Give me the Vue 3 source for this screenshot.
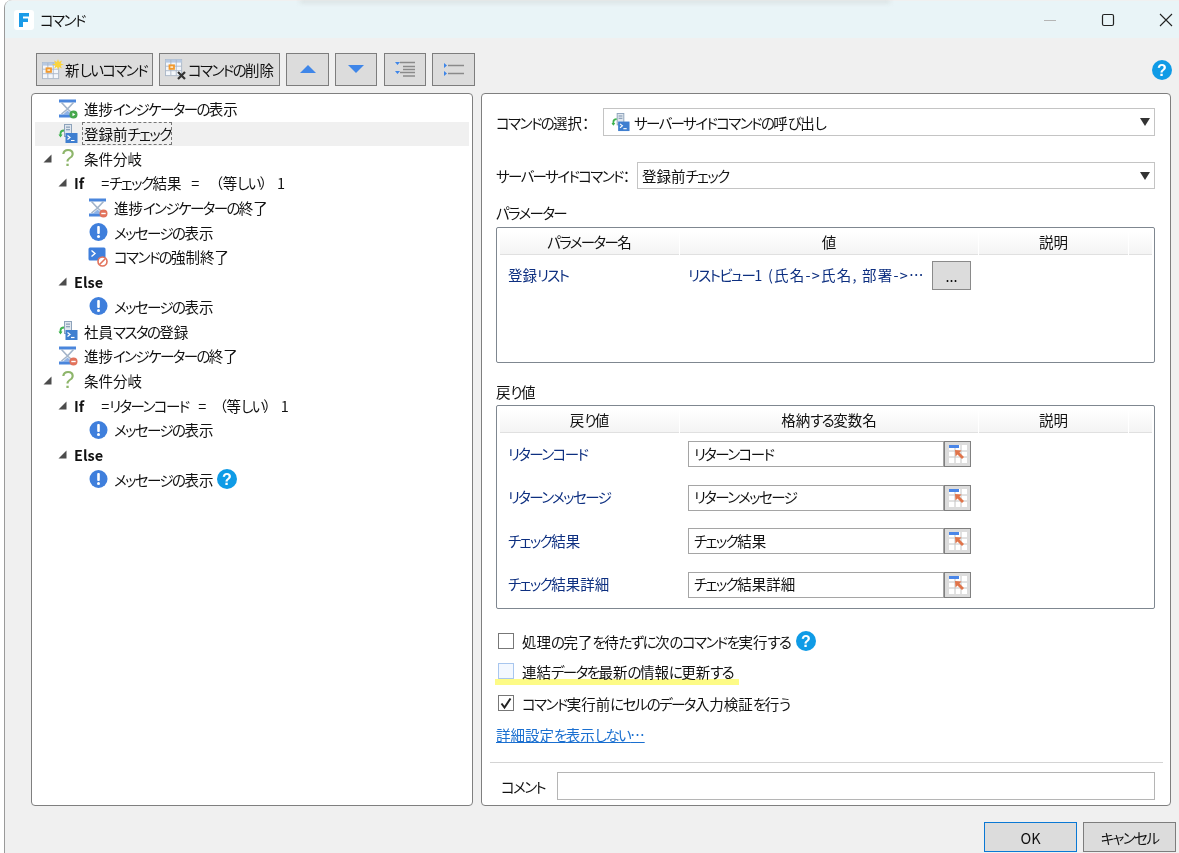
<template>
  <div class="page">
    <!-- icon sheet -->
    <svg class="sheet" aria-hidden="true">
      <defs>
        <symbol id="glass" viewBox="0 0 20 20">
          <rect x="1" y="0.5" width="17" height="3" fill="#4a86dc" />
          <path d="M3.5 3.5 L9.5 10 L3.5 15 M15.5 3.5 L9.5 10 L15.5 15" fill="none" stroke="#a3b4c9" stroke-width="1.6" />
          <path d="M9.5 11.5 L14 15.5 H5 Z" fill="#8fb3e6" />
          <rect x="1" y="15.5" width="13" height="3" fill="#4a86dc" />
        </symbol>
        <symbol id="server" viewBox="0 0 20 20">
          <rect x="6.5" y="0.5" width="7" height="12" fill="#dfe6ee" stroke="#8ea3bb" />
          <rect x="8" y="2.5" width="4" height="1.3" fill="#8ea3bb" />
          <rect x="8" y="5" width="4" height="1.3" fill="#8ea3bb" />
          <rect x="7.5" y="9" width="12" height="10" fill="#3f7fd0" />
          <path d="M9.5 11.5 L12 13.5 L9.5 15.5" fill="none" stroke="#fff" stroke-width="1.2" />
          <path d="M13 16.5 H16.5" stroke="#fff" stroke-width="1.2" />
          <path d="M2.5 12 V9.5 Q2.5 6.5 6 6.5" fill="none" stroke="#3fb34f" stroke-width="1.8" />
          <path d="M0.5 10.5 H4.5 L2.5 13.5 Z" fill="#3fb34f" />
        </symbol>
        <symbol id="grid" viewBox="0 0 20 20">
          <rect x="0.5" y="0.5" width="18" height="18" fill="#f4f7fb" stroke="#a9b6c6" />
          <rect x="0.5" y="0.5" width="18" height="3.5" fill="#b7c9e2" />
          <path d="M6.5 1 V18 M12.5 1 V18 M1 8 H18 M1 13 H18" stroke="#a9b6c6" />
          <rect x="4" y="6" width="7" height="6" fill="#f29a2e" />
          <rect x="6" y="8" width="3" height="2" fill="#fde3bd" />
        </symbol>
        <symbol id="picker" viewBox="0 0 20 20">
          <rect x="1" y="1" width="18" height="18" fill="#fff" />
          <path d="M7 1 V19 M13 1 V19 M1 7 H19 M1 13 H19" stroke="#c4c4c4" />
          <rect x="1" y="1" width="10" height="3" fill="#4a86e8" />
          <path d="M7 6 L13.5 6.5 L11.5 8.5 L16 13 L14 15 L9.5 10.5 L7.5 12.5 Z" fill="#e0744a" />
        </symbol>
      </defs>
    </svg>

    <div class="shadow"></div>
    <div class="window">
      <div class="titlebar">
        <span class="app-icon">
          <svg width="12" height="14" viewBox="0 0 12 14">
            <path d="M1 0 H11 V3.5 H5 V5.5 H10 V9 H5 V14 H1 Z" fill="#1b9be8" />
          </svg>
        </span>
        <Jp class="title" t="コマンド" />
        <span class="win-btns">
          <svg width="14" height="14" viewBox="0 0 14 14"><path d="M1 7.5 H13" stroke="#b5b5b5" /></svg>
          <svg width="14" height="14" viewBox="0 0 14 14"><rect x="1.5" y="1.5" width="11" height="11" rx="1.5" fill="none" stroke="#222" stroke-width="1.2" /></svg>
          <svg width="14" height="14" viewBox="0 0 14 14"><path d="M1 1 L13 13 M13 1 L1 13" stroke="#222" stroke-width="1.1" /></svg>
        </span>
      </div>

      <div class="toolbar">
        <button class="tool wide-a">
          <svg class="tool-icon" width="22" height="22" viewBox="0 0 22 22">
            <use href="#grid" x="0" y="3" width="18" height="18" />
            <path d="M16 0 L17 3 L20 1.5 L18.6 4.6 L22 5.5 L18.6 6.6 L20 9.5 L17 8 L16 11 L15 8 L12 9.5 L13.4 6.6 L10 5.5 L13.4 4.6 L12 1.5 L15 3 Z" fill="#fbd43c" />
          </svg>
          <Jp t="新しいコマンド" />
        </button>
        <button class="tool wide-b">
          <svg class="tool-icon" width="22" height="22" viewBox="0 0 22 22">
            <use href="#grid" x="0" y="0" width="18" height="18" />
            <path d="M13 13 L20 20 M20 13 L13 20" stroke="#333" stroke-width="2.2" />
          </svg>
          <Jp t="コマンドの削除" />
        </button>
        <button class="tool square-a">
          <svg width="16" height="9" viewBox="0 0 16 9"><path d="M8 0 L16 8 H0 Z" fill="#3f86e8" /></svg>
        </button>
        <button class="tool square-b">
          <svg width="16" height="9" viewBox="0 0 16 9"><path d="M0 0 H16 L8 8 Z" fill="#3f86e8" /></svg>
        </button>
        <button class="tool square-c">
          <svg width="22" height="18" viewBox="0 0 22 18">
            <path d="M1 1 H6 L3.5 4 Z M1 10 H6 L3.5 13 Z" fill="#3f86e8" />
            <path d="M6 1.5 H21 M9 5.5 H21 M9 8.5 H21 M6 11.5 H21 M9 15 H21" stroke="#8a8a8a" stroke-width="1.5" />
          </svg>
        </button>
        <button class="tool square-d">
          <svg width="22" height="14" viewBox="0 0 22 14">
            <path d="M1 0 L4 2.5 L1 5 Z M1 8 L4 10.5 L1 13 Z" fill="#3f86e8" />
            <path d="M5 2.5 H21 M5 10.5 H21" stroke="#8a8a8a" stroke-width="1.5" />
          </svg>
        </button>
        <svg class="help top-help" viewBox="0 0 20 20" width="20" height="20">
          <circle cx="10" cy="10" r="10" fill="#0f9be6" />
          <text x="10" y="15.5" class="help-mark">?</text>
        </svg>
      </div>

      <div class="main">
        <div class="tree">
          <div
            v-for="(row, i) in rows"
            :key="i"
            class="tree-row"
            :class="['lvl' + row.level, { selected: row.selected }]"
          >
            <span class="caret">
              <svg v-if="row.caret" width="9" height="9" viewBox="0 0 9 9"><path d="M8.5 0.5 V8.5 H0.5 Z" fill="#4c4c4c" /></svg>
            </span>

            <svg v-if="row.icon === 'start' || row.icon === 'end'" class="node-icon" viewBox="0 0 20 20">
              <use href="#glass" />
              <circle cx="15.5" cy="15.5" r="4" :fill="row.icon === 'start' ? '#46a84d' : '#e2725b'" />
              <path v-if="row.icon === 'start'" d="M14.5 13.8 L17.3 15.5 L14.5 17.2 Z" fill="#fff" />
              <rect v-else x="13.3" y="14.8" width="4.4" height="1.4" fill="#fff" />
            </svg>
            <svg v-else-if="row.icon === 'server'" class="node-icon" viewBox="0 0 20 20"><use href="#server" /></svg>
            <span v-else-if="row.icon === 'branch'" class="node-icon branch-mark">?</span>
            <svg v-else-if="row.icon === 'msg'" class="node-icon" viewBox="0 0 20 20">
              <circle cx="10.5" cy="10" r="9" fill="#3f7fdc" />
              <rect x="9.2" y="4" width="2.6" height="8" rx="1" fill="#fff" />
              <circle cx="10.5" cy="14.6" r="1.5" fill="#fff" />
            </svg>
            <svg v-else-if="row.icon === 'stop'" class="node-icon" viewBox="0 0 20 20">
              <rect x="0.5" y="0.5" width="17" height="13" rx="1.5" fill="#3f7fdc" />
              <path d="M3.5 3.5 L7 6.5 L3.5 9.5" fill="none" stroke="#fff" stroke-width="1.4" />
              <circle cx="14.5" cy="14.5" r="4.5" fill="#fff" stroke="#e2725b" stroke-width="1.6" />
              <path d="M11.5 17.5 L17.5 11.5" stroke="#e2725b" stroke-width="1.6" />
            </svg>

            <b v-if="row.keyword" class="keyword">{{ row.keyword }}</b>
            <Jp v-if="row.expr" class="expr" :t="row.expr" />
            <Jp v-if="row.label" class="label" :class="{ focus: row.selected }" :t="row.label" />
            <svg v-if="row.help" class="help row-help" viewBox="0 0 20 20" width="20" height="20">
              <circle cx="10" cy="10" r="10" fill="#0f9be6" />
              <text x="10" y="15.5" class="help-mark">?</text>
            </svg>
          </div>
        </div>

        <div class="detail">
          <div class="field first">
            <Jp class="field-label" t="コマンドの選択：" />
            <div class="select select-a">
              <svg class="select-icon" viewBox="0 0 20 20" width="19" height="19"><use href="#server" /></svg>
              <Jp t="サーバーサイドコマンドの呼び出し" />
              <i class="arrow"></i>
            </div>
          </div>
          <div class="field second">
            <Jp class="field-label" t="サーバーサイドコマンド：" />
            <div class="select select-b">
              <Jp t="登録前チェック" />
              <i class="arrow"></i>
            </div>
          </div>

          <div class="group-label param-label"><Jp t="パラメーター" /></div>
          <div class="table param-table">
            <div class="thead">
              <span><Jp t="パラメーター名" /></span><span>値</span><span>説明</span><span></span>
            </div>
            <div class="param-row">
              <Jp class="name" t="登録リスト" />
              <Jp class="value" t="リストビュー1 (氏名->氏名, 部署->…" />
              <button class="more">...</button>
            </div>
          </div>

          <div class="group-label ret-label"><Jp t="戻り値" /></div>
          <div class="table ret-table">
            <div class="thead">
              <span><Jp t="戻り値" /></span><span><Jp t="格納する変数名" /></span><span>説明</span><span></span>
            </div>
            <div class="ret-rows">
              <div v-for="name in returns" :key="name" class="ret-row">
                <Jp class="name" :t="name" />
                <span class="input ret-input"><Jp :t="name" /></span>
                <button class="pick">
                  <svg viewBox="0 0 20 20" width="20" height="20"><use href="#picker" /></svg>
                </button>
              </div>
            </div>
          </div>

          <div class="check check-a">
            <span class="box"></span>
            <Jp t="処理の完了を待たずに次のコマンドを実行する" />
            <svg class="help" viewBox="0 0 20 20" width="20" height="20">
              <circle cx="10" cy="10" r="10" fill="#0f9be6" />
              <text x="10" y="15.5" class="help-mark">?</text>
            </svg>
          </div>
          <div class="check check-b">
            <span class="box hover"></span>
            <Jp t="連結データを最新の情報に更新する" />
            <i class="marker"></i>
          </div>
          <div class="check check-c">
            <span class="box">
              <svg width="14" height="14" viewBox="0 0 14 14"><path d="M2.5 7.5 L5.5 11.5 L11.5 2.5" fill="none" stroke="#222" stroke-width="2" /></svg>
            </span>
            <Jp t="コマンド実行前にセルのデータ入力検証を行う" />
          </div>
          <a class="link"><Jp t="詳細設定を表示しない…" /></a>

          <div class="separator"></div>
          <div class="comment">
            <Jp class="comment-label" t="コメント" />
            <span class="input comment-input"></span>
          </div>
        </div>
      </div>

      <div class="footer">
        <button class="action ok">OK</button>
        <button class="action"><Jp t="キャンセル" /></button>
      </div>
    </div>
  </div>
</template>

<script setup>
import { h } from "vue";

// the dialog font has narrow kana, so kana runs get tighter spacing than kanji
const Jp = (props) =>
  h(
    "span",
    props.t
      .split(/([\u3040-\u30ff]+)/)
      .map((part, i) => (i % 2 ? h("span", { class: "kana" }, part) : part)),
  );
Jp.props = ["t"];

const rows = [
  { level: 0, icon: "start", label: "進捗インジケーターの表示" },
  { level: 0, icon: "server", label: "登録前チェック", selected: true },
  { level: 0, caret: true, icon: "branch", label: "条件分岐" },
  { level: 1, caret: true, keyword: "If", expr: "=チェック結果   =     （等しい）   1" },
  { level: 2, icon: "end", label: "進捗インジケーターの終了" },
  { level: 2, icon: "msg", label: "メッセージの表示" },
  { level: 2, icon: "stop", label: "コマンドの強制終了" },
  { level: 1, caret: true, keyword: "Else" },
  { level: 2, icon: "msg", label: "メッセージの表示" },
  { level: 0, icon: "server", label: "社員マスタの登録" },
  { level: 0, icon: "end", label: "進捗インジケーターの終了" },
  { level: 0, caret: true, icon: "branch", label: "条件分岐" },
  { level: 1, caret: true, keyword: "If", expr: "=リターンコード   =    （等しい）   1" },
  { level: 2, icon: "msg", label: "メッセージの表示" },
  { level: 1, caret: true, keyword: "Else" },
  { level: 2, icon: "msg", label: "メッセージの表示", help: true },
];

const returns = ["リターンコード", "リターンメッセージ", "チェック結果", "チェック結果詳細"];
</script>

<style>
body {
  margin: 0;
  overflow: hidden;
  background: #fff;
}

.kana {
  letter-spacing: -1.6px;
}
</style>

<style scoped>
* {
  box-sizing: border-box;
}

.page {
  position: relative;
  width: 1179px;
  height: 853px;
  padding-left: 4px;
  overflow: hidden;
  font-family: "Noto Sans CJK JP", "Noto Sans", sans-serif;
  font-feature-settings: "palt";
  font-size: 14.5px;
  color: #111;
  background: #fff;
}

.sheet {
  position: absolute;
  width: 0;
  height: 0;
}

.shadow {
  position: absolute;
  top: 0;
  left: 300px;
  width: 590px;
  height: 3px;
  background: #d5dcdc;
  filter: blur(2px);
  z-index: 2;
}

.window {
  height: 853px;
  padding-top: 1px;
  background: #f0f0f0;
  border-left: 1px solid #9a9a9a;
  border-top-left-radius: 8px;
  overflow: hidden;
}

.titlebar {
  display: flex;
  align-items: center;
  height: 37px;
  padding-left: 9px;
  background: #e9f4f7;
}

.app-icon {
  display: flex;
  align-items: center;
  justify-content: center;
  width: 20px;
  height: 20px;
  border-radius: 3px;
  background: #fff;
}

.title {
  margin-left: 6px;
}

.win-btns {
  display: flex;
  gap: 44px;
  margin-left: auto;
  margin-right: 6px;
}

.toolbar {
  display: flex;
  align-items: center;
  gap: 6px;
  height: 33px;
  margin-top: 15px;
  padding-left: 31px;
  padding-right: 7px;
}

button {
  font: inherit;
  color: inherit;
}

.tool {
  display: flex;
  align-items: center;
  justify-content: center;
  height: 33px;
  padding: 0;
  background: #dcdcdc;
  border: 1px solid #7d7d7d;
}

.tool-icon {
  margin-right: 1px;
}

.wide-a {
  width: 117px;
}

.wide-b {
  width: 121px;
}

.square-a {
  width: 43px;
}

.square-b {
  width: 42px;
  margin-right: 1px;
}

.square-c {
  width: 42px;
}

.square-d {
  width: 43px;
}

.top-help {
  margin-left: auto;
}

.help-mark {
  font-family: "Liberation Sans", sans-serif;
  font-size: 16px;
  font-weight: 700;
  text-anchor: middle;
  fill: #fff;
}

.branch-mark {
  font-family: "Liberation Sans", sans-serif;
  font-size: 24px;
  line-height: 20px;
  text-align: center;
  color: #8db56a;
}

.main {
  display: flex;
  gap: 8px;
  height: 713px;
  margin-top: 7px;
  padding-left: 26px;
}

.tree {
  width: 442px;
  padding: 3px;
  background: #fff;
  border: 1px solid #7f7f7f;
  border-radius: 4px;
}

.tree-row {
  display: flex;
  align-items: center;
  height: 24.7px;
  padding-bottom: 1px;
  white-space: pre;
}

.tree-row.selected {
  background: #f0f0f0;
}

.lvl0 {
  padding-left: 8px;
}

.lvl1 {
  padding-left: 23px;
}

.lvl2 {
  padding-left: 38px;
}

.caret {
  display: flex;
  align-items: center;
  flex: none;
  width: 15px;
  height: 9px;
}

.lvl1 .caret {
  width: 16px;
}

.node-icon {
  flex: none;
  width: 20px;
  height: 20px;
  margin-right: 6px;
}

.keyword {
  font-weight: 700;
}

.expr {
  margin-left: 17px;
}

.label.focus {
  margin-left: -2px;
  padding: 0 1px 0 2px;
  line-height: 23px;
  outline: 1px dashed #777;
  outline-offset: -1px;
}

.row-help {
  margin-left: 4px;
}

.detail {
  width: 690px;
  padding: 14px 15px 0 14px;
  background: #fff;
  border: 1px solid #7f7f7f;
  border-radius: 4px;
}

.field {
  display: flex;
  align-items: center;
}

.field.second {
  margin-top: 26px;
}

.field-label {
  flex: none;
  white-space: nowrap;
}

.select {
  display: flex;
  align-items: center;
  margin-left: auto;
  padding-left: 4px;
  border: 1px solid #c4c4c4;
  background: #fff;
}

.select-a {
  width: 552px;
  height: 28px;
  padding-left: 7px;
}

.select-b {
  width: 518px;
  height: 27px;
}

.select-icon {
  margin-right: 4px;
}

.arrow {
  width: 0;
  height: 0;
  margin-left: auto;
  margin-right: 4px;
  border-left: 5px solid transparent;
  border-right: 5px solid transparent;
  border-top: 8px solid #333;
}

.group-label {
  height: 20px;
  line-height: 19px;
}

.param-label {
  margin-top: 14px;
}

.ret-label {
  margin-top: 19px;
}

.table {
  width: 659px;
  padding: 3px;
  border: 1px solid #7f8790;
  border-radius: 2px;
}

.param-table {
  height: 136px;
  margin-top: 4px;
}

.ret-table {
  height: 204px;
  margin-top: 3px;
}

.thead {
  display: grid;
  grid-template-columns: 179px 298px 149px 23px;
  gap: 1px;
  height: 24px;
}

.thead > span {
  display: flex;
  align-items: center;
  justify-content: center;
  padding-bottom: 2px;
  background: linear-gradient(#fff, #f4f4f4);
  border-bottom: 1px solid #e0e0e0;
}

.param-row {
  display: flex;
  align-items: center;
  height: 29px;
  margin-top: 6px;
}

.name {
  flex: none;
  width: 188px;
  padding-left: 8px;
  padding-bottom: 2px;
  color: #0d2f80;
}

.value {
  width: 244px;
  padding-bottom: 2px;
  color: #0d2f80;
  letter-spacing: 1.2px;
  white-space: nowrap;
}

.more {
  width: 39px;
  height: 29px;
  padding: 0;
  background: #dcdcdc;
  border: 1px solid #8a8a8a;
}

.ret-rows {
  display: flex;
  flex-direction: column;
  gap: 17.6px;
  margin-top: 8px;
}

.ret-row {
  display: flex;
  align-items: center;
  height: 26px;
}

.input {
  display: flex;
  align-items: center;
  background: #fff;
  border: 1px solid #a5a5a5;
}

.ret-input {
  width: 256px;
  height: 26px;
  padding-left: 5px;
  padding-bottom: 2px;
}

.pick {
  display: flex;
  align-items: center;
  justify-content: center;
  width: 27px;
  height: 26px;
  padding: 0;
  background: #dcdcdc;
  border: 1px solid #808080;
}

.check {
  position: relative;
  display: flex;
  align-items: center;
  height: 20px;
  padding-left: 2px;
}

.check-a {
  margin-top: 22px;
}

.check-b {
  margin-top: 10px;
}

.check-c {
  margin-top: 12px;
}

.box {
  display: flex;
  align-items: center;
  justify-content: center;
  flex: none;
  width: 16px;
  height: 16px;
  margin-right: 8px;
  background: #fff;
  border: 1px solid #777;
}

.box.hover {
  background: #f3f8ff;
  border-color: #a8c6ee;
}

.check .help {
  margin-left: 6px;
}

.marker {
  position: absolute;
  left: -1px;
  top: 18px;
  width: 244px;
  height: 6px;
  background: #fdfb86;
  mix-blend-mode: multiply;
}

.link {
  display: block;
  height: 20px;
  margin-top: 12px;
  line-height: 19px;
  color: #1a6fd0;
  text-decoration: underline;
}

.separator {
  height: 1px;
  margin: 17px -8px 0 -6px;
  background: #d4d4d4;
}

.comment {
  display: flex;
  align-items: center;
  margin-top: 9px;
}

.comment-label {
  margin-left: 5px;
}

.comment-input {
  width: 598px;
  height: 28px;
  margin-left: auto;
  border-color: #b5b5b5;
}

.footer {
  display: flex;
  justify-content: flex-end;
  gap: 6px;
  margin-top: 16px;
  padding-right: 3px;
}

.action {
  width: 93px;
  height: 30px;
  padding: 0;
  background: #dcdcdc;
  border: 1px solid #7d7d7d;
}

.action.ok {
  border: 1px solid #0a78d4;
}
</style>
